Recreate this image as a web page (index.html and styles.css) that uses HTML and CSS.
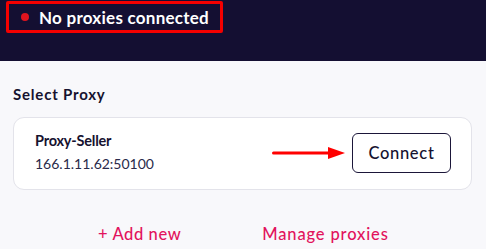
FILE: index.html
```html
<!DOCTYPE html>
<html>
<head>
<meta charset="utf-8">
<link rel="stylesheet" href="styles.css">
</head>
<body>
<header class="top">
  <div class="status">
    <span class="dot"></span>
    <span class="status-text">No proxies connected</span>
  </div>
</header>
<main class="content">
  <h2 class="label">Select Proxy</h2>
  <div class="card">
    <div class="info">
      <div class="name">Proxy-Seller</div>
      <div class="addr">166.1.11.62:50100</div>
    </div>
    <div class="action">
      <svg class="arrow" width="74" height="14" viewBox="0 0 74 14">
        <line x1="1.5" y1="7" x2="58" y2="7" stroke="#f00" stroke-width="3" stroke-linecap="round"/>
        <polygon points="56,1 73,7 56,13" fill="#f00"/>
      </svg>
      <button class="connect">Connect</button>
    </div>
  </div>
  <div class="links">
    <a class="link">+ Add new</a>
    <a class="link">Manage proxies</a>
  </div>
</main>
</body>
</html>
```
FILE: styles.css
```css
* { box-sizing: border-box; }
html, body { margin: 0; padding: 0; }
body {
  width: 486px;
  height: 249px;
  background: #f8f8fb;
  font-family: "Lato", "Noto Sans", sans-serif;
  color: #16122f;
  overflow: hidden;
}
.top {
  background: #140f32;
  height: 61px;
  padding: 1px 0 0 6px;
}
.status {
  display: inline-flex;
  align-items: center;
  width: 217px;
  height: 32px;
  border: 3px solid #f50000;
  border-radius: 2px;
  padding-left: 12px;
}
.dot {
  width: 8px;
  height: 8px;
  border-radius: 50%;
  background: #e0141e;
  margin-right: 10px;
}
.status-text {
  color: #fff;
  font-weight: 700;
  font-size: 17px;
  letter-spacing: 0.25px;
}
.content {
  padding: 23px 14px 0 13px;
}
.label {
  margin: 0;
  font-size: 15px;
  font-weight: 700;
  line-height: 20px;
  letter-spacing: 0.8px;
}
.card {
  margin-top: 13px;
  height: 73px;
  background: #fff;
  border: 1px solid #e3e3ea;
  border-radius: 11px;
  display: flex;
  align-items: center;
  justify-content: space-between;
  padding: 0 20px 2px 21px;
}
.name {
  font-size: 14.5px;
  font-weight: 700;
  line-height: 20px;
  letter-spacing: -0.2px;
}
.addr {
  font-size: 14px;
  font-weight: 400;
  line-height: 20px;
  margin-top: 3px;
  color: #2a2a4a;
}
.action {
  display: flex;
  align-items: center;
}
.arrow { margin-right: 6px; margin-top: 0; }
.connect {
  width: 99px;
  height: 40px;
  border: 1px solid #1b1639;
  border-radius: 6px;
  background: #fff;
  font-family: inherit;
  font-size: 16.5px;
  font-weight: 500;
  letter-spacing: 0.7px;
  color: #16122f;
  padding: 0;
}
.links {
  display: flex;
  padding-left: 85px;
  gap: 81px;
  margin-top: 34px;
}
.link {
  color: #e2135d;
  font-size: 16.5px;
  font-weight: 500;
  letter-spacing: 0.6px;
}
.link + .link { letter-spacing: 0.85px; }
```
